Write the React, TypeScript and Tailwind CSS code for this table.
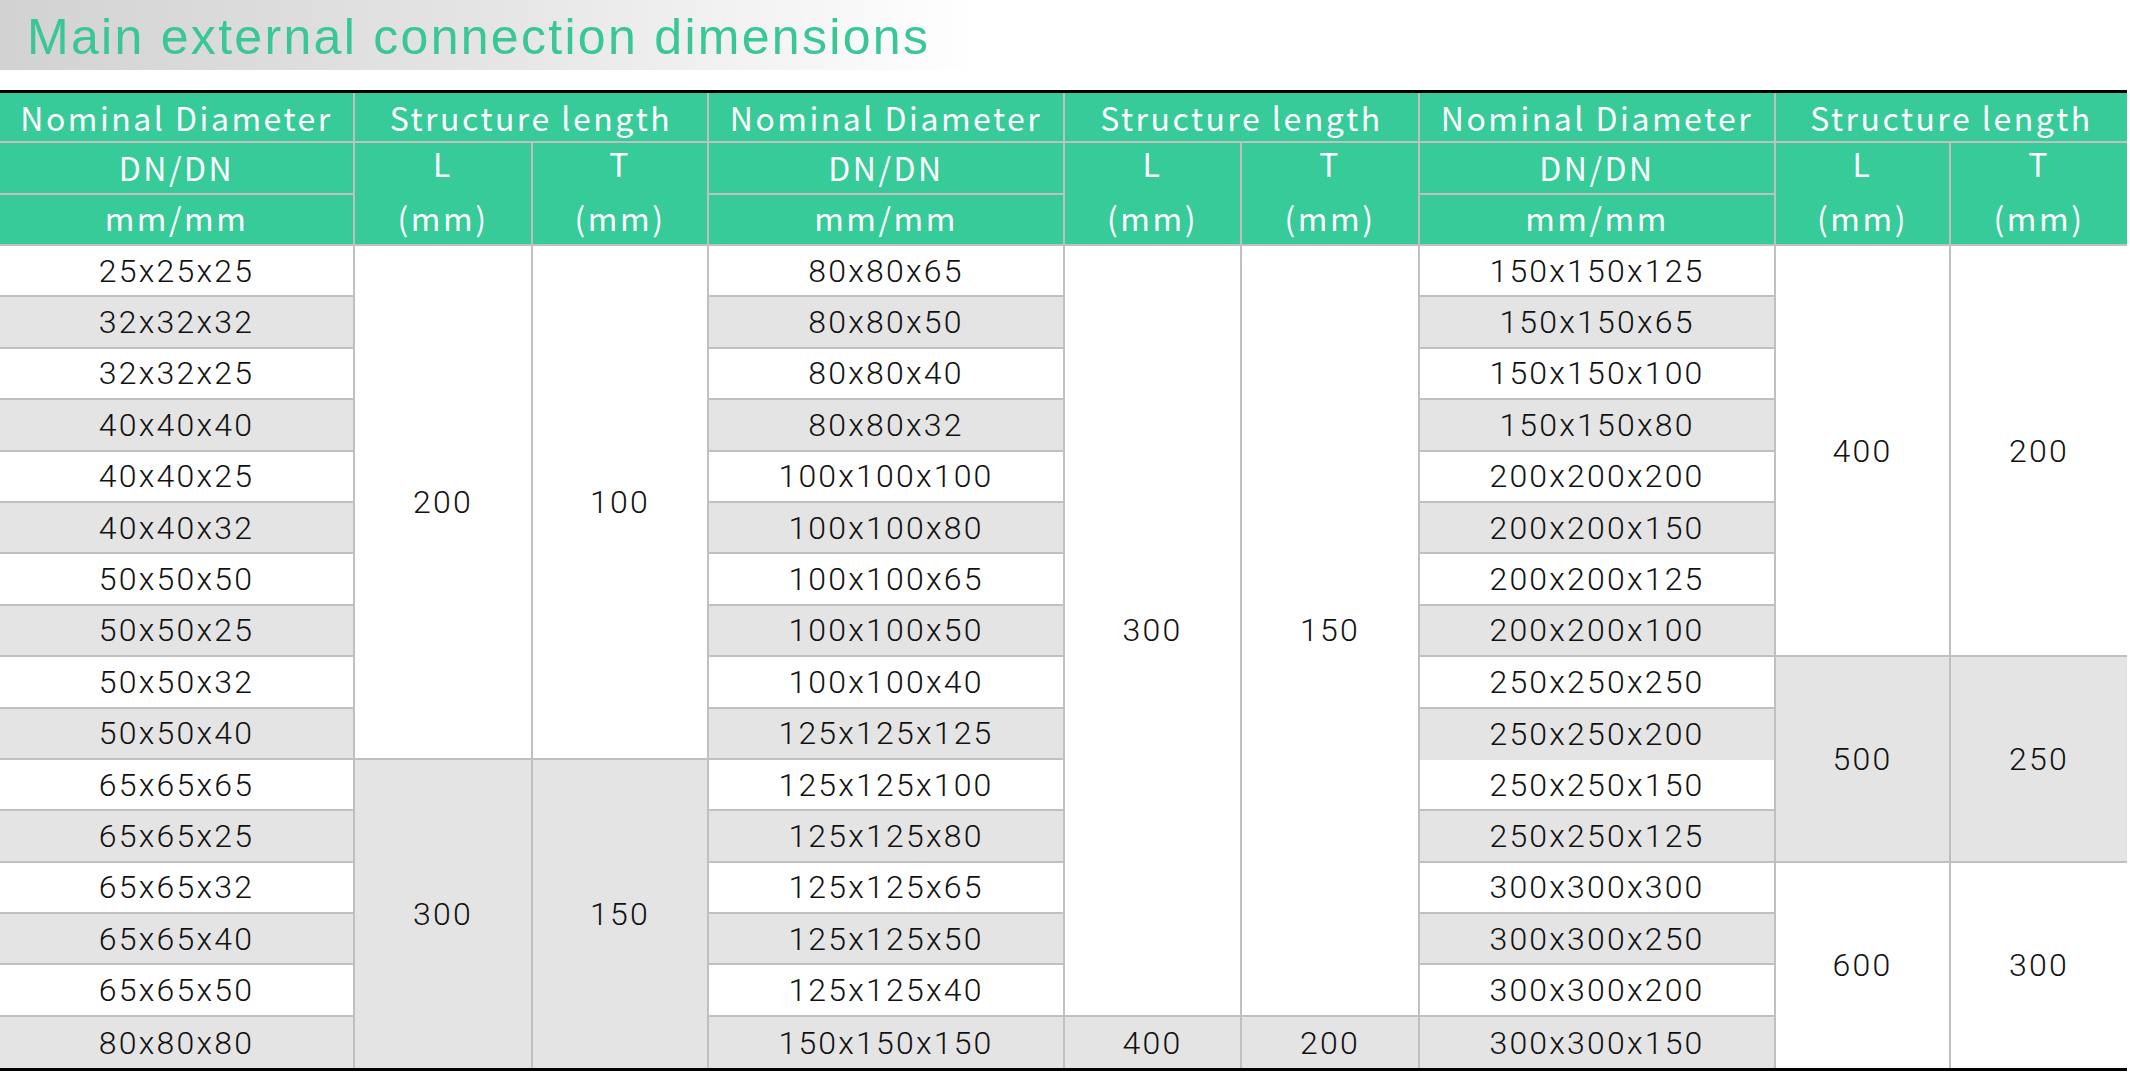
import React from "react";

type Group = { start: number; span: number; l: string; t: string; gray: boolean };
type Block = { dn: string[]; groups: Group[] };

const blocks: Block[] = [
  {
    dn: [
      "25x25x25", "32x32x32", "32x32x25", "40x40x40", "40x40x25", "40x40x32", "50x50x50", "50x50x25",
      "50x50x32", "50x50x40", "65x65x65", "65x65x25", "65x65x32", "65x65x40", "65x65x50", "80x80x80",
    ],
    groups: [
      { start: 0, span: 10, l: "200", t: "100", gray: false },
      { start: 10, span: 6, l: "300", t: "150", gray: true },
    ],
  },
  {
    dn: [
      "80x80x65", "80x80x50", "80x80x40", "80x80x32", "100x100x100", "100x100x80", "100x100x65", "100x100x50",
      "100x100x40", "125x125x125", "125x125x100", "125x125x80", "125x125x65", "125x125x50", "125x125x40", "150x150x150",
    ],
    groups: [
      { start: 0, span: 15, l: "300", t: "150", gray: false },
      { start: 15, span: 1, l: "400", t: "200", gray: true },
    ],
  },
  {
    dn: [
      "150x150x125", "150x150x65", "150x150x100", "150x150x80", "200x200x200", "200x200x150", "200x200x125", "200x200x100",
      "250x250x250", "250x250x200", "250x250x150", "250x250x125", "300x300x300", "300x300x250", "300x300x200", "300x300x150",
    ],
    groups: [
      { start: 0, span: 8, l: "400", t: "200", gray: false },
      { start: 8, span: 4, l: "500", t: "250", gray: true },
      { start: 12, span: 4, l: "600", t: "300", gray: false },
    ],
  },
];

const widths = [355, 178, 176, 356, 177, 178, 356, 175, 176];

const head = "text-white text-[32px] tracking-[2.5px] font-['Noto_Sans_CJK_SC','Noto_Sans',sans-serif] font-normal leading-none";
const body = "text-[#111] text-[32px] tracking-[2.2px] font-light font-['Roboto','Liberation_Sans',sans-serif] leading-none text-center";
const line = "border-[#c0c0c0]";

export default function App() {
  const rows = Array.from({ length: 16 }, (_, r) => r);

  return (
    <div className="w-[2130px] h-[1072px] bg-white overflow-hidden">
      <div className="h-[70px] bg-[linear-gradient(to_right,#d2d2d2_0%,#e4e4e4_22%,#ffffff_46%)] flex items-center pl-[27px]">
        <h1 className="text-[50px] text-[#38c795] tracking-[2.3px] font-['Liberation_Sans',sans-serif] font-normal leading-none pt-[4px]">
          Main external connection dimensions
        </h1>
      </div>
      <div className="h-[20px]" />
      <div className="w-[2127px] h-[3px] bg-black" />
      <table className="border-separate border-spacing-0 table-fixed w-[2127px]">
        <colgroup>
          {widths.map((w, i) => (
            <col key={i} style={{ width: w }} />
          ))}
        </colgroup>
        <thead className="bg-[#36cb98]">
          <tr className="h-[50px]">
            {blocks.map((_, b) => (
              <React.Fragment key={b}>
                <th className={`${head} ${line} border-b-2 border-r-2 p-0`}>Nominal Diameter</th>
                <th colSpan={2} className={`${head} ${line} border-b-2 p-0 ${b < 2 ? "border-r-2" : ""}`}>
                  Structure length
                </th>
              </React.Fragment>
            ))}
          </tr>
          <tr className="h-[52px]">
            {blocks.map((_, b) => (
              <React.Fragment key={b}>
                <th className={`${head} ${line} border-b-2 border-r-2 p-0 pb-[3px]`}>DN/DN</th>
                {["L", "T"].map((x, i) => (
                  <th
                    key={x}
                    rowSpan={2}
                    className={`${head} ${line} p-0 border-b-2 ${b === 2 && i === 1 ? "" : "border-r-2"}`}
                  >
                    <div className="flex flex-col h-[101px]">
                      <div className="h-[51px] flex items-center justify-center pb-[12px]">{x}</div>
                      <div className="h-[50px] flex items-center justify-center pb-[4px]">(mm)</div>
                    </div>
                  </th>
                ))}
              </React.Fragment>
            ))}
          </tr>
          <tr className="h-[51px]">
            {blocks.map((_, b) => (
              <th key={b} className={`${head} ${line} border-b-2 border-r-2 p-0 pb-[5px]`}>
                mm/mm
              </th>
            ))}
          </tr>
        </thead>
        <tbody>
          {rows.map((r) => (
            <tr key={r} className="h-[51.4px]">
              {blocks.map((blk, b) => {
                const g = blk.groups.find((x) => x.start === r);
                const last = r === 15;
                const skipLine = b === 2 && r === 9;
                return (
                  <React.Fragment key={b}>
                    <td
                      className={`${body} ${line} border-r-2 p-0 ${last || skipLine ? "" : "border-b-2"} ${
                        r % 2 === 1 ? "bg-[#e4e4e4]" : "bg-white"
                      }`}
                    >
                      {blk.dn[r]}
                    </td>
                    {g &&
                      [g.l, g.t].map((v, i) => (
                        <td
                          key={i}
                          rowSpan={g.span}
                          className={`${body} ${line} p-0 ${g.start + g.span === 16 ? "" : "border-b-2"} ${
                            b === 2 && i === 1 ? "" : "border-r-2"
                          } ${g.gray ? "bg-[#e4e4e4]" : "bg-white"}`}
                        >
                          {v}
                        </td>
                      ))}
                  </React.Fragment>
                );
              })}
            </tr>
          ))}
        </tbody>
      </table>
      <div className="w-[2127px] h-[3px] bg-black" />
    </div>
  );
}
